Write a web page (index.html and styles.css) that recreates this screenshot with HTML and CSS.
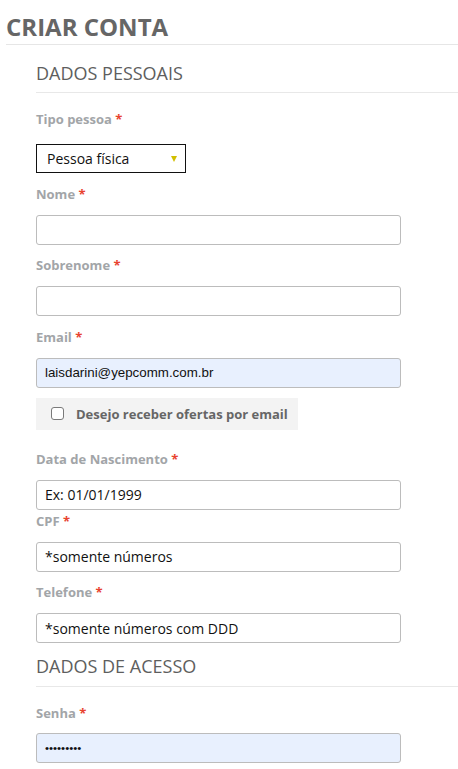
FILE: index.html
```html
<!DOCTYPE html>
<html lang="pt-BR">
<head>
<meta charset="utf-8">
<title>Criar conta</title>
<link rel="stylesheet" href="styles.css">
</head>
<body>
<h1 class="page-title">CRIAR CONTA</h1>
<form class="form">
  <h2 class="section-title first">DADOS PESSOAIS</h2>

  <div class="field field-tipo">
    <label class="label">Tipo pessoa <span class="req">*</span></label>
    <div class="select-wrap">
      <select class="select">
        <option>Pessoa física</option>
        <option>Pessoa jurídica</option>
      </select>
      <span class="select-arrow"></span>
    </div>
  </div>

  <div class="field">
    <label class="label">Nome <span class="req">*</span></label>
    <input class="input" type="text">
  </div>

  <div class="field">
    <label class="label">Sobrenome <span class="req">*</span></label>
    <input class="input" type="text">
  </div>

  <div class="field">
    <label class="label">Email <span class="req">*</span></label>
    <input class="input autofill" type="email" value="laisdarini@yepcomm.com.br">
  </div>

  <label class="optin">
    <input class="checkbox" type="checkbox">
    <span>Desejo receber ofertas por email</span>
  </label>

  <div class="field field-data">
    <label class="label">Data de Nascimento <span class="req">*</span></label>
    <input class="input" type="text" placeholder="Ex: 01/01/1999">
  </div>

  <div class="field field-cpf">
    <label class="label">CPF <span class="req">*</span></label>
    <input class="input" type="text" placeholder="*somente números">
  </div>

  <div class="field">
    <label class="label">Telefone <span class="req">*</span></label>
    <input class="input" type="text" placeholder="*somente números com DDD">
  </div>

  <h2 class="section-title second">DADOS DE ACESSO</h2>

  <div class="field field-senha">
    <label class="label">Senha <span class="req">*</span></label>
    <input class="input autofill pass" type="password" value="123456789">
  </div>
</form>
</body>
</html>
```

FILE: styles.css
```css
html, body {
  margin: 0;
  padding: 0;
  background: #ffffff;
}

body {
  font-family: "Open Sans", "Noto Sans", sans-serif;
  color: #333;
  overflow: hidden;
}

.page-title {
  margin: 0 0 0 6px;
  padding: 12px 0 2px 0;
  font-size: 24px;
  line-height: 30px;
  font-weight: 700;
  color: #666666;
  border-bottom: 1px solid #e6e6e6;
}

.form {
  margin: 0 0 0 36px;
  display: flex;
  flex-direction: column;
  align-items: flex-start;
}

.section-title {
  align-self: stretch;
  margin: 0;
  padding: 0 0 6.5px 0;
  font-size: 18px;
  line-height: 26px;
  font-weight: 400;
  color: #5e5e5e;
  border-bottom: 1px solid #e8e8e8;
}

.section-title.first { margin-top: 14.5px; }
.section-title.second { margin-top: 10px; }

.field {
  display: flex;
  flex-direction: column;
  margin-top: 11.5px;
}

.field-tipo { margin-top: 17px; }
.field-data { margin-top: 20px; }
.field-cpf { margin-top: 2px; }
.field-senha { margin-top: 17px; }

.label {
  display: block;
  font-size: 13px;
  line-height: 18px;
  font-weight: 700;
  color: #a2a5a8;
  margin-bottom: 12px;
}

.field-tipo .label { margin-bottom: 16px; }
.field-senha .label { margin-bottom: 11px; }

.req {
  color: #e8432f;
}

.select-wrap {
  position: relative;
  width: 150px;
  height: 29px;
}

.select {
  appearance: none;
  -webkit-appearance: none;
  box-sizing: border-box;
  width: 150px;
  height: 29px;
  margin: 0;
  padding: 0 0 0 10px;
  border: 1px solid #111;
  border-radius: 0;
  background: #fff;
  font-family: "Open Sans", sans-serif;
  font-size: 14px;
  color: #111;
}

.select-arrow {
  position: absolute;
  left: 135px;
  top: 12px;
  width: 0;
  height: 0;
  border-left: 3.5px solid transparent;
  border-right: 3.5px solid transparent;
  border-top: 6px solid #d2bf00;
  pointer-events: none;
}

.input {
  box-sizing: border-box;
  width: 365px;
  height: 30px;
  margin: 0;
  padding: 0 8px;
  border: 1px solid #bcbcbc;
  border-radius: 3px;
  background: #fff;
  font-family: "Open Sans", sans-serif;
  font-size: 14px;
  color: #111;
  outline: none;
}

.input::placeholder {
  color: #111;
  opacity: 1;
}

.input.autofill {
  background: #e8f0fe;
  font-family: "Liberation Sans", Arial, sans-serif;
  font-size: 13.33px;
  color: #111;
}

.input.pass {
  font-size: 11.5px;
}

.optin {
  margin-top: 10px;
  box-sizing: border-box;
  width: 262px;
  height: 32px;
  padding-left: 15px;
  display: flex;
  align-items: center;
  gap: 12px;
  background: #f3f3f3;
  font-size: 13px;
  font-weight: 700;
  color: #666;
}

.checkbox {
  appearance: none;
  -webkit-appearance: none;
  box-sizing: border-box;
  width: 13px;
  height: 13px;
  margin: 0;
  border: 1px solid #7a7a7a;
  border-radius: 3px;
  background: #fff;
  flex: none;
}
```
